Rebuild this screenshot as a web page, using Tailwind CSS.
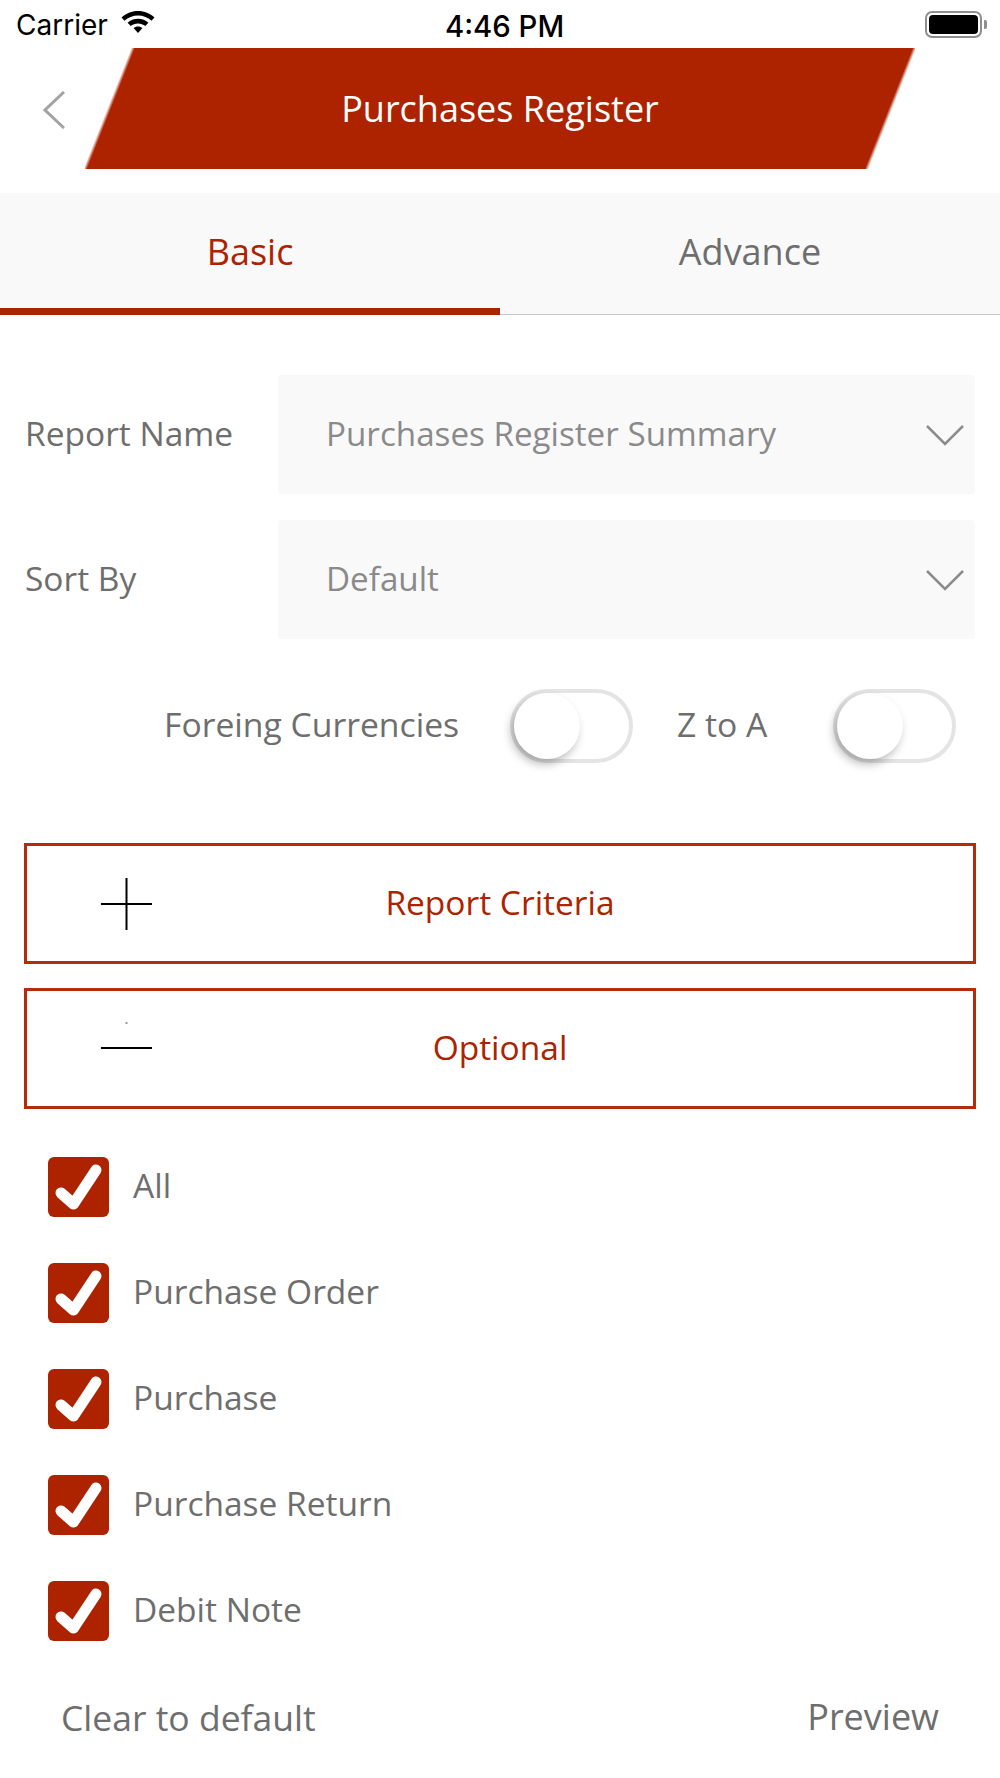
<!DOCTYPE html>
<html lang="en">
<head>
<meta charset="utf-8">
<script src="https://cdn.jsdelivr.net/npm/@tailwindcss/browser@4"></script>
<title>Purchases Register</title>
</head>
<body class="bg-white">
<div class="w-[1000px] h-[1778px] overflow-hidden bg-white font-['Open_Sans','Liberation_Sans',sans-serif] text-[#6e6e6e]">
  <!-- status bar -->
  <div class="relative h-[48px] flex items-center pl-[16px] pt-[2px] text-black font-['Inter',sans-serif]">
    <span class="text-[28px] leading-none">Carrier</span>
    <svg class="ml-[13px] mt-[-4px]" width="34" height="24" viewBox="0 0 34 24"><path fill="#000" d="M17 0C10.500 0 5 2.500 0.500 6.500L3.500 9.800C7 6.600 11.800 4.600 17 4.600S27 6.600 30.500 9.800L33.500 6.500C29 2.500 23.500 0 17 0ZM17 7.800C13 7.800 9.400 9.300 6.600 11.800L9.700 15.100C11.700 13.400 14.200 12.400 17 12.400S22.300 13.400 24.300 15.100L27.400 11.800C24.600 9.300 21 7.800 17 7.800ZM17 15.500C15.300 15.500 13.800 16.100 12.600 17.100L17 22L21.400 17.100C20.200 16.100 18.700 15.500 17 15.500Z"/></svg>
    <span class="absolute left-[445px] top-[12px] text-[29.300px] leading-none font-medium">4:46 PM</span>
    <div class="absolute left-[925px] top-[11px] flex items-center">
      <div class="w-[57px] h-[27px] rounded-[7px] border-2 border-[#8f8f8f] p-[2px]"><div class="w-full h-full rounded-[4px] bg-black"></div></div>
      <div class="w-[3px] h-[9px] ml-[2px] rounded-r-[2px] bg-[#8f8f8f]"></div>
    </div>
  </div>
  <!-- header -->
  <div class="flex h-[121px]">
    <div class="w-[85px] pl-[43px] pt-[43px]">
      <svg width="22" height="38" viewBox="0 0 22 38"><path d="M21 1L2 19L21 37" fill="none" stroke="#a3a3a3" stroke-width="3"/></svg>
    </div>
    <div class="w-[830px] h-full bg-[linear-gradient(111.6deg,transparent_43px,#ad2300_46.500px,#ad2300_769.500px,transparent_773px)] flex items-center justify-center">
      <span class="text-white text-[36px] leading-none">Purchases Register</span>
    </div>
  </div>
  <!-- tabs -->
  <div class="mt-[24px] grid grid-cols-2 h-[122px] bg-[#f9f9f9] border-b border-[#c4c4c4]">
    <div class="flex items-center justify-center border-b-[7px] border-[#ad2300] mb-[-1px] text-[#ad2300] text-[36px] pt-[3px]">Basic</div>
    <div class="flex items-center justify-center text-[36px] pb-[4px]">Advance</div>
  </div>
  <!-- selects -->
  <div class="px-[25px] pt-[60px] text-[33.500px]">
    <div class="flex items-center h-[119px]">
      <span class="w-[253px] shrink-0 mt-[-2px]">Report Name</span>
      <div class="flex-1 h-full rounded-[4px] bg-[#f9f9f9] flex items-center justify-between pl-[48px] pr-[11px] text-[#8a8a8a]">
        <span class="mt-[-2px] text-[33.200px]">Purchases Register Summary</span>
        <svg width="38" height="22" viewBox="0 0 38 22"><path d="M1 2L19 20L37 2" fill="none" stroke="#8c8c8c" stroke-width="2.500"/></svg>
      </div>
    </div>
    <div class="flex items-center h-[119px] mt-[26px]">
      <span class="w-[253px] shrink-0 mt-[-2px]">Sort By</span>
      <div class="flex-1 h-full rounded-[4px] bg-[#f9f9f9] flex items-center justify-between pl-[48px] pr-[11px] text-[#8a8a8a]">
        <span class="mt-[-2px] text-[33.200px]">Default</span>
        <svg width="38" height="22" viewBox="0 0 38 22"><path d="M1 2L19 20L37 2" fill="none" stroke="#8c8c8c" stroke-width="2.500"/></svg>
      </div>
    </div>
  </div>
  <!-- toggles -->
  <div class="mt-[50px] flex items-center h-[74px] pl-[164px] text-[33.700px]">
    <span class="w-[346px] mt-[-4px]">Foreing Currencies</span>
    <div class="relative w-[123px] h-[74px] rounded-full border-[4px] border-[#e4e4e4]">
      <div class="absolute left-0 top-0 w-[66px] h-[66px] rounded-full bg-white shadow-[-3px_5px_10px_rgba(0,0,0,0.28)]"></div>
    </div>
    <span class="ml-[44px] w-[156px] mt-[-4px]">Z to A</span>
    <div class="relative w-[123px] h-[74px] rounded-full border-[4px] border-[#e4e4e4]">
      <div class="absolute left-0 top-0 w-[66px] h-[66px] rounded-full bg-white shadow-[-3px_5px_10px_rgba(0,0,0,0.28)]"></div>
    </div>
  </div>
  <!-- accordions -->
  <div class="mt-[80px] mx-[24px] w-[952px] h-[121px] border-[3px] border-[#b32d0c] relative flex items-center justify-center text-[#ad2300] text-[33.500px]">
    <svg class="absolute left-[74px] top-[32px]" width="51" height="52" viewBox="0 0 51 52"><path d="M25.500 0V52M0 26H51" stroke="#000" stroke-width="2"/></svg>
    <span class="mt-[-3px]">Report Criteria</span>
  </div>
  <div class="mt-[24px] mx-[24px] w-[952px] h-[121px] border-[3px] border-[#b32d0c] relative flex items-center justify-center text-[#ad2300] text-[33.500px]">
    <svg class="absolute left-[74px] top-[31px]" width="51" height="52" viewBox="0 0 51 52"><path d="M0 26H51" stroke="#000" stroke-width="2"/><path d="M24.500 1H26.500" stroke="#777" stroke-width="1.500"/></svg>
    <span class="mt-[-3px]">Optional</span>
  </div>
  <!-- checks -->
  <div class="mt-[48px] pl-[48px] flex flex-col gap-[46px] text-[33.500px]">
    <div class="flex items-center h-[60px]"><svg width="61" height="60" viewBox="0 0 61 60"><rect width="61" height="60" rx="6" fill="#ad2300"/><path d="M13 36L25.500 47L48 13" fill="none" stroke="#fff" stroke-width="11" stroke-linecap="round" stroke-linejoin="round"/></svg><span class="ml-[24px] mt-[-4px]">All</span></div>
    <div class="flex items-center h-[60px]"><svg width="61" height="60" viewBox="0 0 61 60"><rect width="61" height="60" rx="6" fill="#ad2300"/><path d="M13 36L25.500 47L48 13" fill="none" stroke="#fff" stroke-width="11" stroke-linecap="round" stroke-linejoin="round"/></svg><span class="ml-[24px] mt-[-4px]">Purchase Order</span></div>
    <div class="flex items-center h-[60px]"><svg width="61" height="60" viewBox="0 0 61 60"><rect width="61" height="60" rx="6" fill="#ad2300"/><path d="M13 36L25.500 47L48 13" fill="none" stroke="#fff" stroke-width="11" stroke-linecap="round" stroke-linejoin="round"/></svg><span class="ml-[24px] mt-[-4px]">Purchase</span></div>
    <div class="flex items-center h-[60px]"><svg width="61" height="60" viewBox="0 0 61 60"><rect width="61" height="60" rx="6" fill="#ad2300"/><path d="M13 36L25.500 47L48 13" fill="none" stroke="#fff" stroke-width="11" stroke-linecap="round" stroke-linejoin="round"/></svg><span class="ml-[24px] mt-[-4px]">Purchase Return</span></div>
    <div class="flex items-center h-[60px]"><svg width="61" height="60" viewBox="0 0 61 60"><rect width="61" height="60" rx="6" fill="#ad2300"/><path d="M13 36L25.500 47L48 13" fill="none" stroke="#fff" stroke-width="11" stroke-linecap="round" stroke-linejoin="round"/></svg><span class="ml-[24px] mt-[-4px]">Debit Note</span></div>
  </div>
  <!-- footer -->
  <div class="mt-[56px] flex justify-between pl-[61px] pr-[61px] text-[35.500px] leading-[40px]">
    <span>Clear to default</span>
    <span class="text-[36px]">Preview</span>
  </div>
</div>
</body>
</html>
